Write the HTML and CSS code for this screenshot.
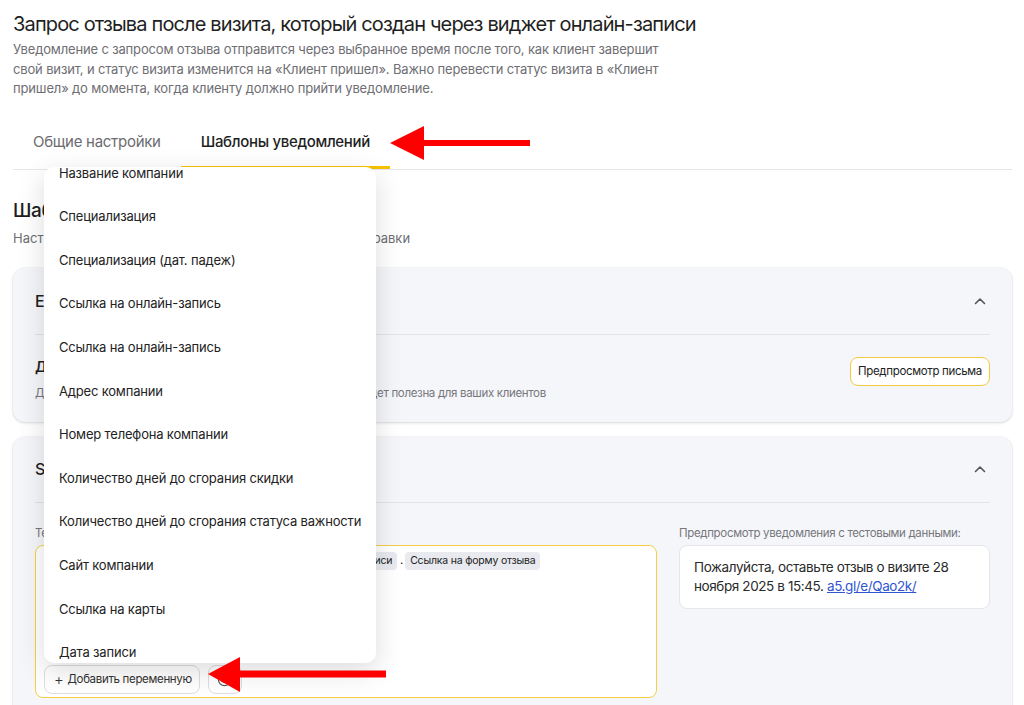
FILE: index.html
```html
<!DOCTYPE html>
<html lang="ru">
<head>
<meta charset="utf-8">
<title>Запрос отзыва</title>
<link rel="stylesheet" href="styles.css">
</head>
<body>
<div class="page">
  <h1 class="title">Запрос отзыва после визита, который создан через виджет онлайн-записи</h1>
  <p class="desc">Уведомление с запросом отзыва отправится через выбранное время после того, как клиент завершит<br>свой визит, и статус визита изменится на «Клиент пришел». Важно перевести статус визита в «Клиент<br>пришел» до момента, когда клиенту должно прийти уведомление.</p>

  <div class="tabs">
    <div class="tab">Общие настройки</div>
    <div class="tab active">Шаблоны уведомлений</div>
  </div>

  <h2 class="section-title">Шаблоны уведомлений</h2>
  <p class="section-sub">Настройте шаблоны уведомлений для всех каналов отправки</p>

  <div class="card">
    <div class="card-head">
      <span>Email</span>
      <svg class="chevron" width="12" height="8" viewBox="0 0 12 8"><polyline points="1.5,6.5 6,2 10.5,6.5" fill="none" stroke="#555" stroke-width="1.6" stroke-linecap="round" stroke-linejoin="round"/></svg>
    </div>
    <div class="card-body email-body">
      <div>
        <div class="block-title">Дополнительный блок</div>
        <div class="block-desc">Добавьте в письмо дополнительную информацию, которая будет полезна для ваших клиентов</div>
      </div>
      <button class="btn-outline">Предпросмотр письма</button>
    </div>
  </div>

  <div class="card card-sms">
    <div class="card-head">
      <span>SMS</span>
      <svg class="chevron" width="12" height="8" viewBox="0 0 12 8"><polyline points="1.5,6.5 6,2 10.5,6.5" fill="none" stroke="#555" stroke-width="1.6" stroke-linecap="round" stroke-linejoin="round"/></svg>
    </div>
    <div class="card-body sms-body">
      <div class="col">
        <div class="label">Текст уведомления</div>
        <div class="editor">
          <div class="editor-text">Пожалуйста, оставьте отзыв о визите <span class="chip">Дата записи</span> в <span class="chip">Время записи</span> . <span class="chip">Ссылка на форму отзыва</span></div>
          <div class="editor-actions">
            <button class="btn-small"><span class="plus">+</span>Добавить переменную</button>
            <button class="btn-small btn-icon">
              <svg width="15" height="15" viewBox="0 0 16 16"><circle cx="8" cy="8" r="6.5" fill="none" stroke="#555" stroke-width="1.3"/><circle cx="5.8" cy="6.5" r="0.9" fill="#555"/><circle cx="10.2" cy="6.5" r="0.9" fill="#555"/><path d="M5 9.6 Q8 12.4 11 9.6" fill="none" stroke="#555" stroke-width="1.2" stroke-linecap="round"/></svg>
            </button>
          </div>
        </div>
      </div>
      <div class="col">
        <div class="label">Предпросмотр уведомления с тестовыми данными:</div>
        <div class="preview">Пожалуйста, оставьте отзыв о визите 28 ноября 2025 в 15:45. <a class="link" href="#">a5.gl/e/Qao2k/</a></div>
      </div>
    </div>
  </div>
</div>

<div class="dropdown">
  <div class="dropdown-list">
    <div class="dropdown-item">Название компании</div>
    <div class="dropdown-item">Специализация</div>
    <div class="dropdown-item">Специализация (дат. падеж)</div>
    <div class="dropdown-item">Ссылка на онлайн-запись</div>
    <div class="dropdown-item">Ссылка на онлайн-запись</div>
    <div class="dropdown-item">Адрес компании</div>
    <div class="dropdown-item">Номер телефона компании</div>
    <div class="dropdown-item">Количество дней до сгорания скидки</div>
    <div class="dropdown-item">Количество дней до сгорания статуса важности</div>
    <div class="dropdown-item">Сайт компании</div>
    <div class="dropdown-item">Ссылка на карты</div>
    <div class="dropdown-item">Дата записи</div>
    <div class="dropdown-item">Время записи</div>
  </div>
</div>

<svg class="arrow arrow-top" width="144" height="38" viewBox="0 0 144 38"><polygon points="2,19 36,2 36,16 142,16 142,22 36,22 36,36" fill="#fe0000"/></svg>
<svg class="arrow arrow-bottom" width="182" height="38" viewBox="0 0 182 38"><polygon points="2,18 34,1 34,14.5 180,14.5 180,21.5 34,21.5 34,36" fill="#fe0000"/></svg>
</body>
</html>
```

FILE: styles.css
```css
html, body {
  margin: 0;
  padding: 0;
  background: #ffffff;
}
body {
  font-family: Inter, "Noto Sans", "Liberation Sans", sans-serif;
  color: #1f1f1f;
  overflow: hidden;
  height: 705px;
  position: relative;
}
.page {
  padding: 10px 12px 0 13px;
}
.title {
  margin: 0;
  font-size: 20px;
  line-height: 28px;
  font-weight: 400;
  letter-spacing: -0.85px;
  color: #1f1f1f;
}
.desc {
  margin: 2px 0 0;
  font-size: 13px;
  line-height: 19.5px;
  letter-spacing: -0.15px;
  color: #6e6e73;
}
.tabs {
  display: flex;
  margin-top: 13px;
  border-bottom: 1px solid #e5e5ea;
}
.tab {
  padding: 20px 20px 14px;
  font-size: 15px;
  line-height: 20px;
  letter-spacing: -0.28px;
  color: #6b6b70;
  border-bottom: 3px solid transparent;
}
.tab.active {
  color: #1f1f1f;
  font-weight: 500;
  letter-spacing: -0.32px;
  border-bottom-color: #f7c300;
}
.section-title {
  margin: 28px 0 0;
  font-size: 19px;
  line-height: 26px;
  font-weight: 500;
  letter-spacing: -0.4px;
}
.section-sub {
  margin: 5px 0 0;
  font-size: 13px;
  line-height: 18px;
  color: #6e6e73;
}
.card {
  background: #f5f6fa;
  border-radius: 12px;
  box-shadow: 0 1px 3px rgba(0, 0, 0, 0.14), 0 0 0 1px rgba(0, 0, 0, 0.025);
  padding: 0 22px;
  margin-top: 21px;
}
.card + .card {
  margin-top: 15px;
}
.card-head {
  height: 66px;
  display: flex;
  align-items: center;
  justify-content: space-between;
  border-bottom: 1px solid #e2e3e9;
  font-size: 16px;
  font-weight: 500;
}
.card-sms .card-head {
  height: 65px;
}
.chevron {
  margin-right: 4px;
}
.email-body {
  display: flex;
  justify-content: space-between;
  align-items: flex-start;
  padding: 22px 0 21px;
}
.block-title {
  font-size: 14px;
  line-height: 20px;
  font-weight: 600;
  letter-spacing: -0.2px;
}
.block-desc {
  margin-top: 8px;
  font-size: 11.5px;
  line-height: 16px;
  letter-spacing: -0.33px;
  color: #77777c;
}
.btn-outline {
  height: 29px;
  padding: 0 7px;
  background: #ffffff;
  border: 1px solid #f5c842;
  border-radius: 8px;
  font-family: inherit;
  font-size: 11.5px;
  letter-spacing: -0.33px;
  color: #222;
}
.sms-body {
  display: grid;
  grid-template-columns: 622px 311px;
  column-gap: 22px;
  padding: 22px 0 24px;
}
.label {
  font-size: 11.5px;
  line-height: 16px;
  letter-spacing: -0.33px;
  color: #77777c;
  margin-bottom: 4px;
}
.editor {
  height: 153px;
  box-sizing: border-box;
  border: 1.5px solid #f6cd45;
  border-radius: 8px;
  background: #ffffff;
  display: flex;
  flex-direction: column;
  justify-content: space-between;
  padding: 5px 8px 3px 8px;
}
.editor-text {
  font-size: 11.5px;
  line-height: 18px;
  letter-spacing: -0.68px;
  color: #222;
}
.chip {
  display: inline-block;
  background: #e8eaef;
  border-radius: 4px;
  padding: 0 5px;
  font-size: 10.5px;
  line-height: 18px;
  letter-spacing: -0.2px;
  color: #222;
}
.editor-actions {
  display: flex;
  gap: 8px;
}
.btn-small {
  height: 29px;
  box-sizing: border-box;
  display: flex;
  align-items: center;
  gap: 4px;
  padding: 0 7px 0 9px;
  background: #ffffff;
  border: 1px solid #dcdde3;
  border-radius: 8px;
  font-family: inherit;
  font-size: 11.5px;
  letter-spacing: -0.33px;
  color: #333;
}
.plus {
  font-size: 15px;
  line-height: 1;
  font-weight: 300;
}
.btn-icon {
  width: 34px;
  justify-content: center;
  padding: 0;
}
.preview {
  background: #ffffff;
  border: 1px solid #e5e6eb;
  border-radius: 8px;
  padding: 12px 14px;
  font-size: 13.5px;
  line-height: 19px;
  letter-spacing: -0.4px;
  color: #2a2a2a;
}
.link {
  color: #2f55d4;
  text-decoration: underline;
}
.dropdown {
  position: absolute;
  left: 44px;
  top: 167px;
  width: 332px;
  height: 496px;
  background: #ffffff;
  border-radius: 10px;
  box-shadow: 0 8px 28px rgba(0, 0, 0, 0.14);
  overflow: hidden;
  z-index: 5;
}
.dropdown-list {
  margin-top: -16.1px;
}
.dropdown-item {
  height: 43.6px;
  display: flex;
  align-items: center;
  padding: 0 15px;
  font-size: 13px;
  letter-spacing: -0.18px;
  white-space: nowrap;
  color: #222;
}
.arrow {
  position: absolute;
  z-index: 10;
}
.arrow-top {
  left: 388px;
  top: 124px;
}
.arrow-bottom {
  left: 206px;
  top: 656px;
}
```
